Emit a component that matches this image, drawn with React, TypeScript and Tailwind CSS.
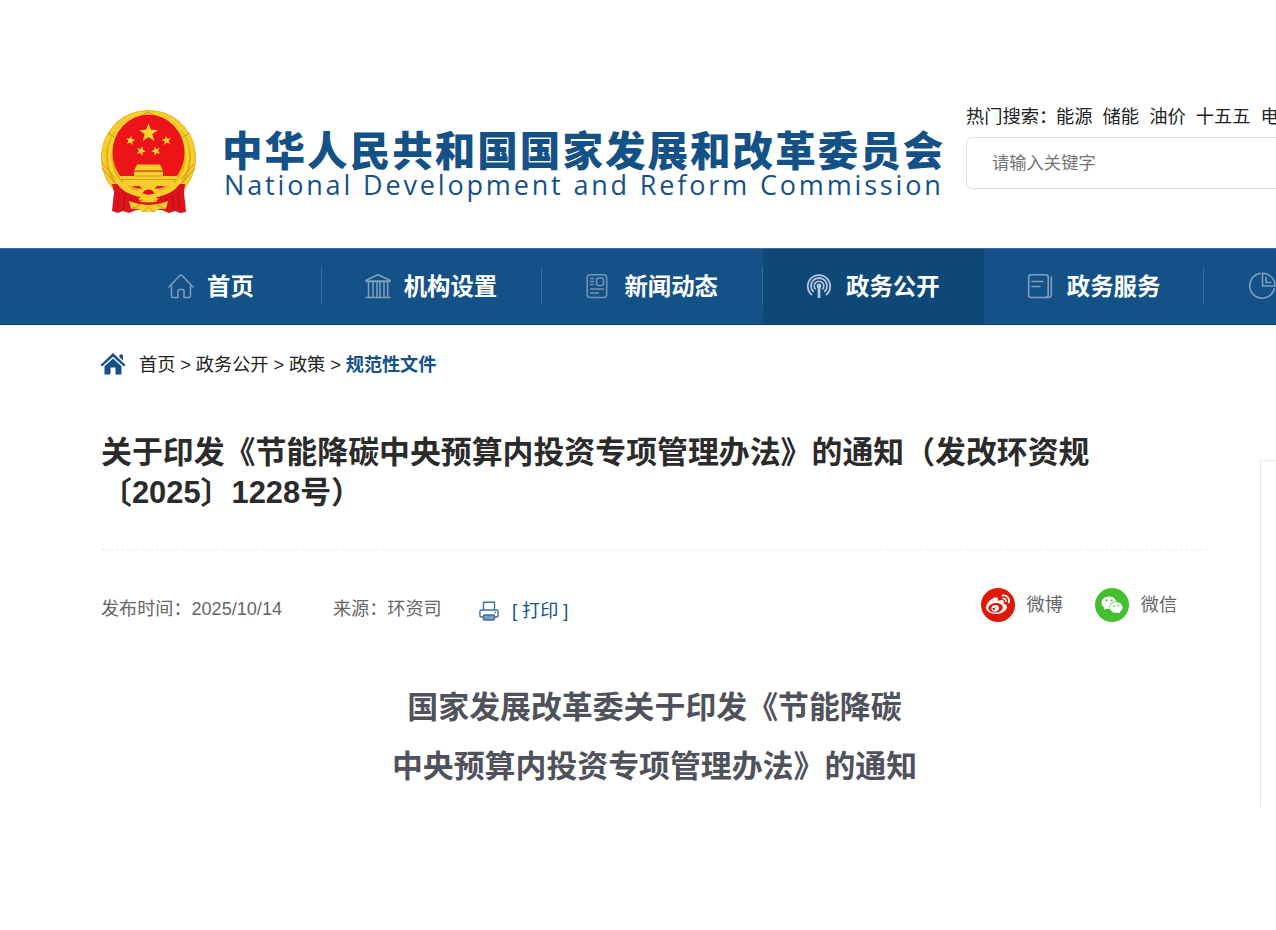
import { ReactNode } from 'react';
import { FaWeibo, FaWeixin } from 'react-icons/fa';

const LATIN = "font-['Liberation_Sans','Noto_Sans_CJK_SC',sans-serif]";

function Star({ x, y, r, rot = 0 }: { x: number; y: number; r: number; rot?: number }) {
  const points = Array.from({ length: 10 }, (_, i) => {
    const radius = i % 2 === 0 ? r : r * 0.42;
    const angle = (Math.PI / 5) * i - Math.PI / 2;
    return `${(radius * Math.cos(angle)).toFixed(2)},${(radius * Math.sin(angle)).toFixed(2)}`;
  }).join(' ');
  return <polygon points={points} transform={`translate(${x} ${y}) rotate(${rot})`} fill="#f7d631" />;
}

function Emblem() {
  return (
    <svg viewBox="0 0 97 107" className="h-[107px] w-[97px] shrink-0">
      <ellipse cx="48.5" cy="48.5" rx="47.5" ry="47.5" fill="#e3b31e" />
      <ellipse cx="48.5" cy="48.5" rx="44.5" ry="44.5" fill="none" stroke="#f3d02c" strokeWidth="4" />
      <ellipse cx="48.5" cy="48" rx="41.5" ry="42.5" fill="none" stroke="#d9a51a" strokeWidth="1" strokeDasharray="6 3" />
      <ellipse cx="48.5" cy="47" rx="39" ry="40.5" fill="none" stroke="#f5d32e" strokeWidth="3.5" />
      <ellipse cx="48.5" cy="43.500" rx="36" ry="38" fill="#ec1319" />
      <path d="M2 59l13 15M2 54l14 16M95 59L82 74M95 54L81 70M43 6l5-3 6 3M8 24l6 4M89 24l-6 4" stroke="#c98d12" strokeWidth=".9" fill="none" />
      {/* 天安门 */}
      <path d="M37 55.500h23l3 6H34zM34 63h29v4H34zM20 67h57v3l-3 1v6H23v-6l-3-1z" fill="#f6cf2e" />
      <path d="M34 62.300h29M34 67h29M21 70.500h55" stroke="#cf9618" strokeWidth=".8" />
      {/* 红绸 */}
      <path d="M12 75c8 0 16 0 24 7h25c8-7 16-7 24-7l-1 9 2 19-6 1-5-2-6 2-7-3H36l-7 3-6-2-5 2-6-2 2-19z" fill="#df131a" />
      <path d="M19 85l-2 17M25 86l-2 16M31 88l-1 13M78 85l2 17M72 86l2 16M66 88l1 13" stroke="#b00d15" strokeWidth="1" />
      <path d="M14 72c6 0 13 4 19 8 8 4 23 4 31 0 6-4 13-8 19-8-4 3-7 9-14 12-12 6-29 6-41 0-7-3-10-9-14-12z" fill="#f6cf2e" />
      <circle cx="48.5" cy="84.500" r="9.500" fill="none" stroke="#f6cf2e" strokeWidth="3" strokeDasharray="3 1.5" />
      <circle cx="48.5" cy="84.500" r="8.500" fill="#f6cf2e" />
      <path d="M42.500 84.500a6.500 6.500 0 0 1 12 0c-4 1.500-8 1.500-12 0z" fill="#df131a" />
      <path d="M29 92c8 2 12 1 14-1h11c2 2 6 3 14 1l-2 8c-6-1-8 0-11 3H42c-3-3-5-4-11-3z" fill="#f6cf2e" />
      <path d="M31 91.500c11 4 24 4 35 0" stroke="#df131a" strokeWidth="2.500" fill="none" />
      <path d="M31 100l9-4M66 100l-9-4M43 103l5.500-5 5.500 5" stroke="#c98d12" strokeWidth=".9" fill="none" />
      <Star x={48.5} y={24} r={9.8} />
      <Star x={30.5} y={31.5} r={4.9} rot={10} />
      <Star x={66.5} y={31.5} r={4.9} rot={-10} />
      <Star x={41} y={42} r={4.9} rot={20} />
      <Star x={56} y={42} r={4.9} rot={-20} />
    </svg>
  );
}

const icono = 'h-[28px] w-[28px] shrink-0';

function HomeIcon() {
  return (
    <svg viewBox="0 0 28 28" className={icono} fill="none" stroke="#7f9fbf" strokeWidth="1.5" strokeLinejoin="round" strokeLinecap="round">
      <path d="M2 15L13 3.5a1.4 1.4 0 0 1 2 0L26 15M4.5 14v10a1.5 1.5 0 0 0 1.500 1.500H11v-7a1 1 0 0 1 1-1h4a1 1 0 0 1 1 1v7h5a1.500 1.500 0 0 0 1.500-1.500V14" />
    </svg>
  );
}

function BankIcon() {
  return (
    <svg viewBox="0 0 28 28" className={icono} fill="none" stroke="#7f9fbf" strokeWidth="1.5">
      <path d="M2 9v-.8L14 2.700l12 5.500V9zM2 9.500h24M4.500 10v15M9 10v15M13 10v15M16 10v15M20 10v15M23.700 10v15M1.500 25.500h25" />
    </svg>
  );
}

function NewsIcon() {
  return (
    <svg viewBox="0 0 28 28" className={icono} fill="none" stroke="#6f94b8" strokeWidth="1.6">
      <rect x="4.200" y="2.700" width="19.500" height="22.800" rx="3" />
      <rect x="13.500" y="6" width="7" height="7.500" rx="2" />
      <path d="M7 6.500h4M7 9.500h4M7 12.500h4M7 17h14M7 21h9" />
    </svg>
  );
}

function SignalIcon() {
  return (
    <svg viewBox="0 0 28 28" className={icono} fill="none" stroke="#b5c7da" strokeWidth="1.8">
      <path d="M7 23a11.200 11.200 0 1 1 14 0M8.700 20a8 8 0 1 1 10.600 0M10.600 17.300a4.700 4.700 0 1 1 6.800 0" />
      <circle cx="14" cy="14" r="1.500" fill="#b5c7da" />
      <path d="M14 13.500V26" strokeWidth="2.800" />
    </svg>
  );
}

function DocIcon() {
  return (
    <svg viewBox="0 0 28 28" className={icono} fill="none" stroke="#7f9fbf" strokeWidth="1.6" strokeLinecap="round">
      <rect x="2.700" y="2.700" width="19.500" height="22.800" rx="2.500" />
      <path d="M6 9.500h11M6 14.500h8M25.300 5v17.500a3 3 0 0 1-3 3h-3" />
    </svg>
  );
}

function PieIcon() {
  return (
    <svg viewBox="0 0 28 28" className={icono} fill="none" stroke="#7f9fbf" strokeWidth="1.5">
      <path d="M13 1.300A12.500 12.500 0 1 0 26.500 16" />
      <path d="M14.500 1.300V14h12.500A12.500 12.500 0 0 0 14.500 1.300zM18 5v5.500h5.500" />
    </svg>
  );
}

interface NavItem {
  texto: string;
  icon: ReactNode;
  caja: string;
  activo?: boolean;
}

const menu: NavItem[] = [
  { texto: '首页', icon: <HomeIcon />, caja: 'pl-[66px] gap-[12px] border-r' },
  { texto: '机构设置', icon: <BankIcon />, caja: 'pl-[42px] gap-[12px] border-r' },
  { texto: '新闻动态', icon: <NewsIcon />, caja: 'pl-[41px] gap-[13px] border-r' },
  { texto: '政务公开', icon: <SignalIcon />, caja: 'pl-[42px] gap-[13px]', activo: true },
  { texto: '政务服务', icon: <DocIcon />, caja: 'pl-[42px] gap-[13px] border-r' },
  { texto: '发展数据', icon: <PieIcon />, caja: 'pl-[44px] gap-[12px] border-r' },
];

function Header() {
  return (
    <header className="flex h-[248px] w-[1500px] pl-[100px]">
      <div className="pt-[109px]">
        <Emblem />
      </div>
      <div className="ml-[25px] w-[744px] pt-[122px] whitespace-nowrap text-[#145186]">
        <div className="h-[47px] font-['Noto_Sans_CJK_SC',sans-serif] text-[40.500px] leading-[54px] font-black tracking-[2.050px]">
          中华人民共和国国家发展和改革委员会
        </div>
        <div className="pl-[2px] font-['Open_Sans','Noto_Sans',sans-serif] text-[27px] leading-[32px] tracking-[2.840px]">
          National Development and Reform Commission
        </div>
      </div>
      <div className="pt-[103px]">
        <div className="flex h-[27px] items-center text-[18.300px] whitespace-nowrap text-[#222]">
          <span className="w-[90px]">热门搜索：</span>
          <span className="mr-[10px]">能源</span>
          <span className="mr-[10px]">储能</span>
          <span className="mr-[10px]">油价</span>
          <span className="mr-[10px]">十五五</span>
          <span>电力</span>
        </div>
        <div className="mt-[7px] flex h-[52px] w-[420px] items-center rounded-[6px] border border-[#dedede] pt-[2px] pl-[25px] text-[17.300px] text-[#757575]">
          请输入关键字
        </div>
      </div>
    </header>
  );
}

function Nav() {
  return (
    <nav className="h-[77px] border-y border-t-[#3b6d9a] border-b-[#0b3f6e] bg-[#145186]">
      <div className="flex h-full w-[1500px] pl-[101px]">
        {menu.map((item) => (
          <div
            key={item.texto}
            className={`flex w-[220.700px] shrink-0 items-center ${item.activo ? 'bg-[#0e4877]' : ''}`}
          >
            <div className={`mb-[2px] flex h-[38px] w-full items-center border-[#3a6d9a] ${item.caja}`}>
              {item.icon}
              <span className="pt-[2px] text-[23.400px] leading-[30px] font-bold whitespace-nowrap text-white">{item.texto}</span>
            </div>
          </div>
        ))}
      </div>
    </nav>
  );
}

function Breadcrumb() {
  return (
    <div className="flex h-[78px] items-center pl-[100px] text-[18.200px] whitespace-nowrap text-[#222]">
      <svg viewBox="0 0 26 24" className="mr-[13px] h-[24px] w-[26px]" fill="#145186">
        <path d="M13 1L25.500 13l-1.600 1.500L13 4.800 2.100 14.500.5 13zM19.500 2.500H23V8.500l-3.500-3.300z" />
        <path d="M13 6.500l8.500 7.700V22.500H15.500v-7h-5v7H4.500v-8.300z" />
      </svg>
      <span className="pt-[3px] tracking-[-0.050px]">首页 &gt; 政务公开 &gt; 政策 &gt;&nbsp;</span>
      <span className="pt-[3px] font-bold tracking-[-0.100px] text-[#145186]">规范性文件</span>
    </div>
  );
}

function PrintIcon() {
  return (
    <svg viewBox="0 0 20 20" className="h-[20px] w-[20px]" fill="none" stroke="#3f6f9b" strokeWidth="1.400">
      <path d="M4.500 9V1.200h11V9M4.500 16H2.200A1.300 1.300 0 0 1 .9 14.700V10.300A1.300 1.300 0 0 1 2.200 9h15.600a1.300 1.300 0 0 1 1.300 1.300v4.400a1.300 1.300 0 0 1-1.300 1.300h-2.300" />
      <rect x="4.500" y="14" width="11" height="5" rx="1" fill="#7d9fbe" />
      <path d="M15.500 11.500h1.500" />
    </svg>
  );
}

function MetaRow() {
  return (
    <div className="flex h-[54px] items-center text-[18.100px] whitespace-nowrap text-[#666]">
      <span className="w-[232px] pt-[3px]">发布时间：2025/10/14</span>
      <span className="w-[146px] pt-[3px]">来源：环资司</span>
      <span className="flex items-center pt-[6px] text-[#145186]">
        <PrintIcon />
        <span className="ml-[13px] pt-px">[ 打印 ]</span>
      </span>
      <div className="ml-auto flex items-center pr-[31px] pb-[6px]">
        <span className="flex h-[34px] w-[34px] items-center justify-center rounded-full bg-[#dc1a05] text-white">
          <FaWeibo className="h-[24px] w-[24px]" />
        </span>
        <span className="ml-[12px] pt-[2px]">微博</span>
        <span className="ml-[32px] flex h-[34px] w-[34px] items-center justify-center rounded-full bg-[#44bf2f] text-white">
          <FaWeixin className="h-[22px] w-[22px]" />
        </span>
        <span className="ml-[12px] pt-[2px]">微信</span>
      </div>
    </div>
  );
}

export default function App() {
  return (
    <div className={`h-[930px] w-[1276px] overflow-hidden bg-white ${LATIN}`}>
      <Header />
      <Nav />
      <Breadcrumb />
      <div className="flex">
        <main className="ml-[101px] w-[1107px] shrink-0 pt-[30px]">
          <h1 className="text-[30.900px] leading-[39.500px] font-bold whitespace-nowrap text-[#2b2b2b]">
            关于印发《节能降碳中央预算内投资专项管理办法》的通知（发改环资规
            <br />
            〔2025〕1228号）
          </h1>
          <div className="mt-[37px] border-t border-dashed border-[#e8e8e8]" />
          <div className="mt-[31px]">
            <MetaRow />
          </div>
          <div className="mt-[43px] text-center text-[30.900px] leading-[59px] font-bold text-[#50525b]">
            国家发展改革委关于印发《节能降碳
            <br />
            中央预算内投资专项管理办法》的通知
          </div>
        </main>
        {/* Columna lateral, solo asoma el borde */}
        <aside className="mt-[57px] ml-[52px] h-[347px] w-[300px] shrink-0 border-t border-l border-[#e8e8e8]" />
      </div>
    </div>
  );
}
